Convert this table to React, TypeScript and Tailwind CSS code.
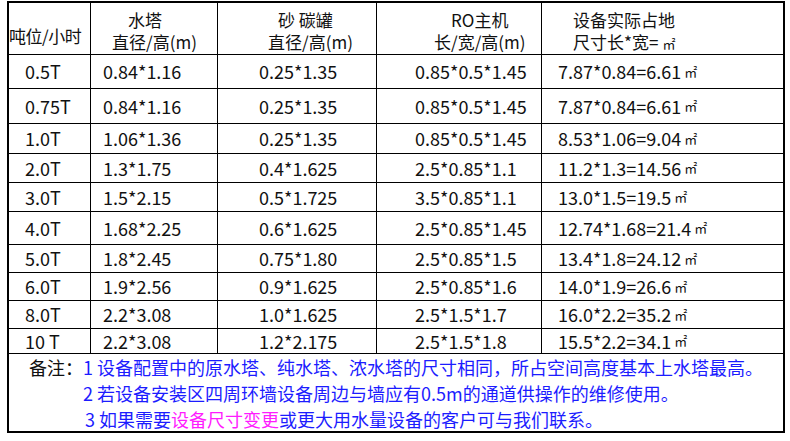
const font = { fontFamily: '"Noto Sans CJK SC", "Noto Sans", sans-serif' };

type Row = { h: string; cells: string[] };

// column widths: 82 / 127 / 159 / 165 / 244
const rows: Row[] = [
  { h: 'h-[34px]', cells: ['0.5T', '0.84*1.16', '0.25*1.35', '0.85*0.5*1.45', '7.87*0.84=6.61'] },
  { h: 'h-[35px]', cells: ['0.75T', '0.84*1.16', '0.25*1.35', '0.85*0.5*1.45', '7.87*0.84=6.61'] },
  { h: 'h-[30px]', cells: ['1.0T', '1.06*1.36', '0.25*1.35', '0.85*0.5*1.45', '8.53*1.06=9.04'] },
  { h: 'h-[29px]', cells: ['2.0T', '1.3*1.75', '0.4*1.625', '2.5*0.85*1.1', '11.2*1.3=14.56'] },
  { h: 'h-[29px]', cells: ['3.0T', '1.5*2.15', '0.5*1.725', '3.5*0.85*1.1', '13.0*1.5=19.5'] },
  { h: 'h-[33px]', cells: ['4.0T', '1.68*2.25', '0.6*1.625', '2.5*0.85*1.45', '12.74*1.68=21.4'] },
  { h: 'h-[28px]', cells: ['5.0T', '1.8*2.45', '0.75*1.80', '2.5*0.85*1.5', '13.4*1.8=24.12'] },
  { h: 'h-[28px]', cells: ['6.0T', '1.9*2.56', '0.9*1.625', '2.5*0.85*1.6', '14.0*1.9=26.6'] },
  { h: 'h-[28px]', cells: ['8.0T', '2.2*3.08', '1.0*1.625', '2.5*1.5*1.7', '16.0*2.2=35.2'] },
  { h: 'h-[25px]', cells: ['10 T', '2.2*3.08', '1.2*2.175', '2.5*1.5*1.8', '15.5*2.2=34.1'] },
];

const widths = ['w-[82px]', 'w-[127px]', 'w-[159px]', 'w-[165px]', 'w-[244px]'];
const pads = ['pl-[16px]', 'pl-[12px]', 'pl-[41px]', 'pl-[38px]', 'pl-[16px]'];

function Sqm() {
  return <span className="ml-[3px] text-[13px]">㎡</span>;
}

export default function App() {
  return (
    <div className="w-[790px] h-[441px] bg-white text-[#111] pt-[1px] pl-[7px]" style={font}>
      <div className="w-[778px] border-2 border-black">
        {/* header */}
        <div className="flex h-[52px] border-b border-black text-[17px] leading-[22px]">
          <div className={`${widths[0]} border-r border-black flex items-center pt-[15px] tracking-[-0.5px]`}>吨位/小时</div>
          <div className={`${widths[1]} border-r border-black pt-[6px]`}>
            <div className="pl-[37px]">水塔</div>
            <div className="pl-[21px]">直径/高(m)</div>
          </div>
          <div className={`${widths[2]} border-r border-black pt-[6px]`}>
            <div className="pl-[60px]">砂 碳罐</div>
            <div className="pl-[50px]">直径/高(m)</div>
          </div>
          <div className={`${widths[3]} border-r border-black pt-[6px]`}>
            <div className="pl-[74px]">RO主机</div>
            <div className="pl-[57px]">长/宽/高(m)</div>
          </div>
          <div className="flex-1 pt-[6px] pl-[31px]">
            <div>设备实际占地</div>
            <div>
              尺寸长*宽=<span className="ml-[4px] text-[13px]">㎡</span>
            </div>
          </div>
        </div>

        {rows.map((r, i) => (
          <div key={i} className={`flex ${r.h} border-b border-black text-[18px]`}>
            {r.cells.map((c, j) => (
              <div
                key={j}
                className={`${j < 4 ? widths[j] + ' border-r border-black' : 'flex-1'} ${pads[j]} flex items-center`}
              >
                {c}
                {j === 4 && <Sqm />}
              </div>
            ))}
          </div>
        ))}

        {/* notes */}
        <div className="h-[77px] pl-[20px] text-[18px] leading-[26px]">
          <div className="flex">
            <span>备注：</span>
            <span className="text-[#1c1cff]">1 设备配置中的原水塔、纯水塔、浓水塔的尺寸相同，所占空间高度基本上水塔最高。</span>
          </div>
          <div className="pl-[54px] text-[#1c1cff]">2 若设备安装区四周环墙设备周边与墙应有0.5m的通道供操作的维修使用。</div>
          <div className="pl-[56px] text-[#1c1cff]">
            3 如果需要<span className="text-[#ff1cff]">设备尺寸变更</span>或更大用水量设备的客户可与我们联系。
          </div>
        </div>
      </div>
    </div>
  );
}
